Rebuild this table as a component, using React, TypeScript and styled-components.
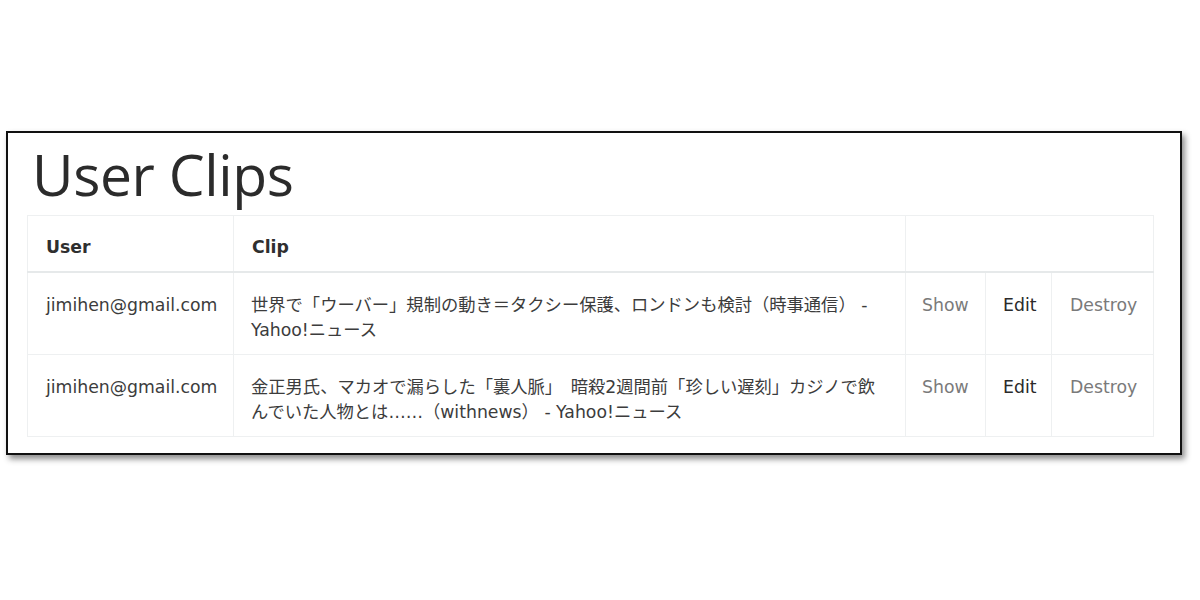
import React from "react";
import styled, { createGlobalStyle } from "styled-components";

const Global = createGlobalStyle`
  html, body { margin: 0; padding: 0; background: #ffffff; }
  body { font-family: "DejaVu Sans", "Noto Sans CJK JP", sans-serif; }
`;

const Page = styled.div`
  width: 1200px;
  height: 600px;
  padding: 131px 0 0 6px;
  box-sizing: border-box;
`;

const Frame = styled.div`
  width: 1176px;
  height: 324px;
  box-sizing: border-box;
  border: 2px solid #111;
  box-shadow: 3px 4px 6px rgba(0, 0, 0, 0.45);
  background: #fff;
  padding: 0 0 0 19px;
  display: flex;
  flex-direction: column;
`;

const Title = styled.h1`
  margin: 13px 0 12px 5px;
  font-family: "Open Sans", "Liberation Sans", sans-serif;
  font-weight: 400;
  font-size: 57px;
  line-height: 57px;
  color: #2b2b2b;
  letter-spacing: -0.4px;
`;

const Table = styled.table`
  width: 1126px;
  table-layout: fixed;
  border-collapse: collapse;
  font-size: 17.3px;
  line-height: 25px;
  color: #3c3c3c;
`;

const HeadCell = styled.th`
  text-align: left;
  font-weight: 700;
  padding: 19px 17px 11px 18px;
  border: 1px solid #eef0f1;
  border-bottom: 2px solid #e6e9ea;
  color: #2f2f2f;
`;

const Cell = styled.td<{ $pad?: number }>`
  vertical-align: top;
  padding: 20px ${(p) => p.$pad ?? 17}px 11px ${(p) => p.$pad ?? 17}px;
  border: 1px solid #eef0f1;
`;

const UserCell = styled(Cell)`
  padding-left: 18px;
`;

const ActionLink = styled.a<{ $strong?: boolean }>`
  color: ${(p) => (p.$strong ? "#2a2a2a" : "#7a7a7a")};
  text-decoration: none;
  cursor: pointer;
`;

const rows = [
  {
    user: "jimihen@gmail.com",
    clip: "世界で「ウーバー」規制の動き＝タクシー保護、ロンドンも検討（時事通信） - Yahoo!ニュース",
  },
  {
    user: "jimihen@gmail.com",
    clip: "金正男氏、マカオで漏らした「裏人脈」　暗殺2週間前「珍しい遅刻」カジノで飲んでいた人物とは……（withnews） - Yahoo!ニュース",
  },
];

export default function App() {
  return (
    <>
      <Global />
      <Page>
        <Frame>
          <Title>User Clips</Title>
          <Table>
            <colgroup>
              <col style={{ width: 206 }} />
              <col style={{ width: 672 }} />
              <col style={{ width: 80 }} />
              <col style={{ width: 66 }} />
              <col style={{ width: 102 }} />
            </colgroup>
            <thead>
              <tr>
                <HeadCell>User</HeadCell>
                <HeadCell>Clip</HeadCell>
                <HeadCell colSpan={3} />
              </tr>
            </thead>
            <tbody>
              {rows.map((r, i) => (
                <tr key={i}>
                  <UserCell>{r.user}</UserCell>
                  <Cell>{r.clip}</Cell>
                  <Cell $pad={16}>
                    <ActionLink>Show</ActionLink>
                  </Cell>
                  <Cell>
                    <ActionLink $strong>Edit</ActionLink>
                  </Cell>
                  <Cell $pad={18}>
                    <ActionLink>Destroy</ActionLink>
                  </Cell>
                </tr>
              ))}
            </tbody>
          </Table>
        </Frame>
      </Page>
    </>
  );
}
